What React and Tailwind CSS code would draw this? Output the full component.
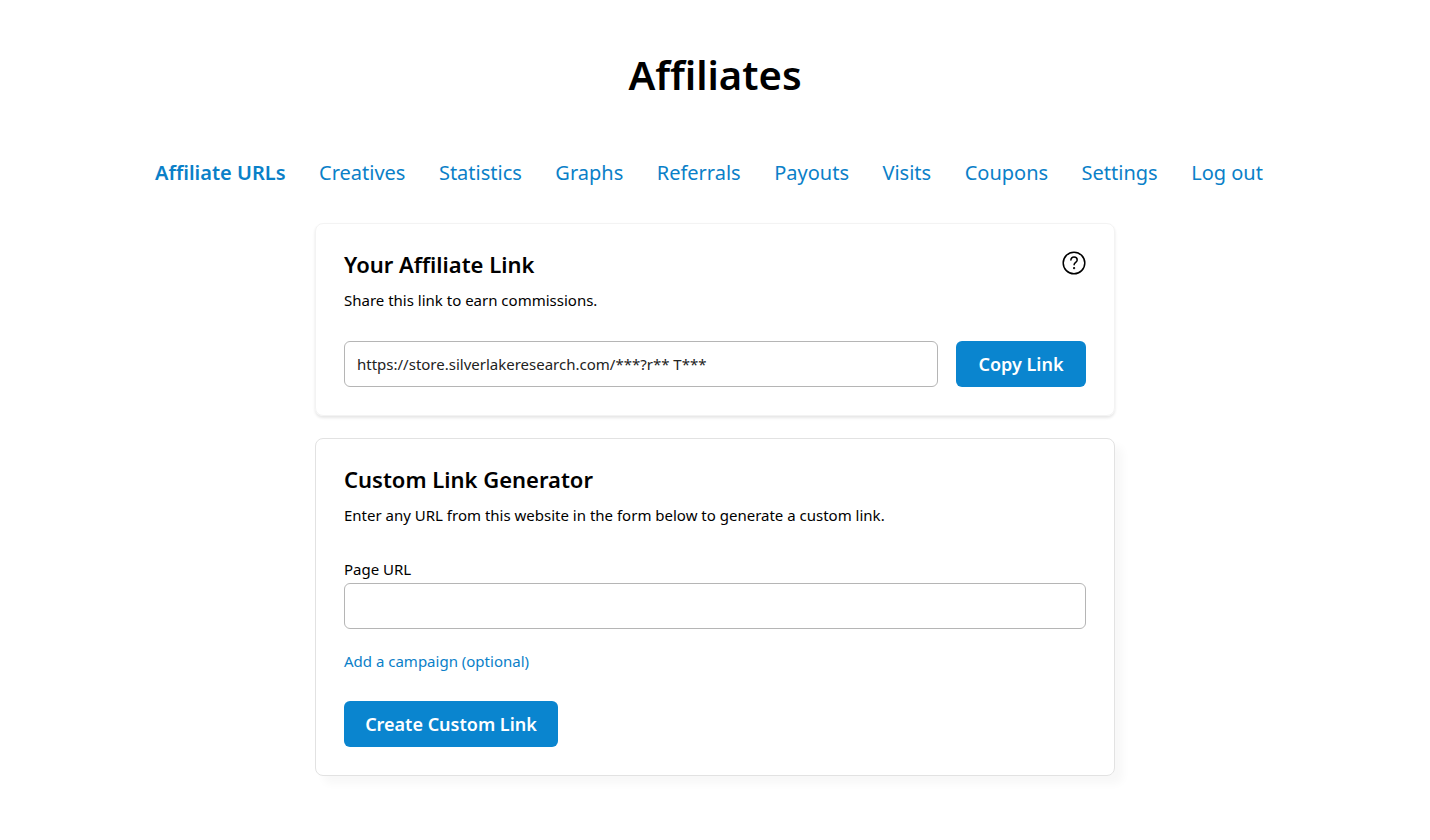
import { useState } from "react";

const tabs = [
    "Affiliate URLs",
    "Creatives",
    "Statistics",
    "Graphs",
    "Referrals",
    "Payouts",
    "Visits",
    "Coupons",
    "Settings",
    "Log out",
];

const HelpIcon = () => (
    <svg viewBox="0 0 24 24" className="h-6 w-6" fill="none" stroke="currentColor" strokeWidth="1.5" strokeLinecap="round" strokeLinejoin="round" aria-hidden="true">
        <circle cx="12" cy="12" r="10.8" />
        <path d="M8.9 9c0-1.8 1.3-2.9 3.1-2.9s3.2 1.1 3.2 2.8c0 2.5-3.1 2.4-3.1 4.9" />
        <circle cx="12.1" cy="17.2" r="0.4" fill="currentColor" />
    </svg>
);

const CardHeader = ({ title, text, children }) => (
    <div className="flex items-start justify-between">
        <div>
            <h2 className="text-[22px] leading-8 font-semibold">{title}</h2>
            <p className="mt-2 text-[15px] leading-6">{text}</p>
        </div>
        {children}
    </div>
);

const App = () => {
    const [pageUrl, setPageUrl] = useState("");

    return (
        <main className="px-6 pt-[47px] pb-16 font-['Noto_Sans',sans-serif] text-black">
            <h1 className="text-center text-[40px] leading-14 font-semibold">Affiliates</h1>

            <nav className="mx-auto mt-[54px] flex max-w-[1120px] flex-wrap justify-between gap-x-4 pr-3 text-xl leading-8 text-[#0a80c8]">
                {tabs.map((tab, index) => (
                    <a key={tab} href="#" className={index === 0 ? "font-semibold" : "hover:underline"}>
                        {tab}
                    </a>
                ))}
            </nav>

            <section className="mx-auto mt-[34px] max-w-[800px] rounded-lg border border-[#f3f3f3] px-7 pt-6 pb-7 shadow-[0_2px_3px_rgba(0,0,0,0.1)]">
                <CardHeader title="Your Affiliate Link" text="Share this link to earn commissions.">
                    <button type="button" aria-label="Help" className="mt-[3px]">
                        <HelpIcon />
                    </button>
                </CardHeader>
                <div className="mt-[29px] flex gap-[18px]">
                    <input
                        readOnly
                        aria-label="Your affiliate link"
                        value="https://store.silverlakeresearch.com/***?r** T***"
                        className="h-[46px] min-w-0 flex-1 rounded-md border border-[#b5b5b5] px-3 text-[15px] text-[#222222] outline-none"
                    />
                    <button type="button" className="h-[46px] w-[130px] rounded-md bg-[#0a85cf] text-lg font-semibold text-white">
                        Copy Link
                    </button>
                </div>
            </section>

            <section className="mx-auto mt-[22px] max-w-[800px] rounded-lg border border-[#e2e2e2] px-7 pt-6 pb-7 shadow-[8px_8px_8px_rgba(0,0,0,0.03)]">
                <CardHeader title="Custom Link Generator" text="Enter any URL from this website in the form below to generate a custom link." />
                <label htmlFor="page-url" className="mt-[30px] block text-[15px] leading-6">
                    Page URL
                </label>
                <input
                    id="page-url"
                    value={pageUrl}
                    onChange={(event) => setPageUrl(event.target.value)}
                    className="mt-0.5 block h-[46px] w-full rounded-md border border-[#b5b5b5] px-3 text-[15px] outline-none"
                />
                <a href="#" className="mt-5 block w-fit text-[15px] leading-6 text-[#0a80c8]">
                    Add a campaign (optional)
                </a>
                <button type="button" className="mt-7 h-[46px] w-[214px] rounded-md bg-[#0a85cf] text-lg font-semibold text-white">
                    Create Custom Link
                </button>
            </section>
        </main>
    );
};

export default App;
